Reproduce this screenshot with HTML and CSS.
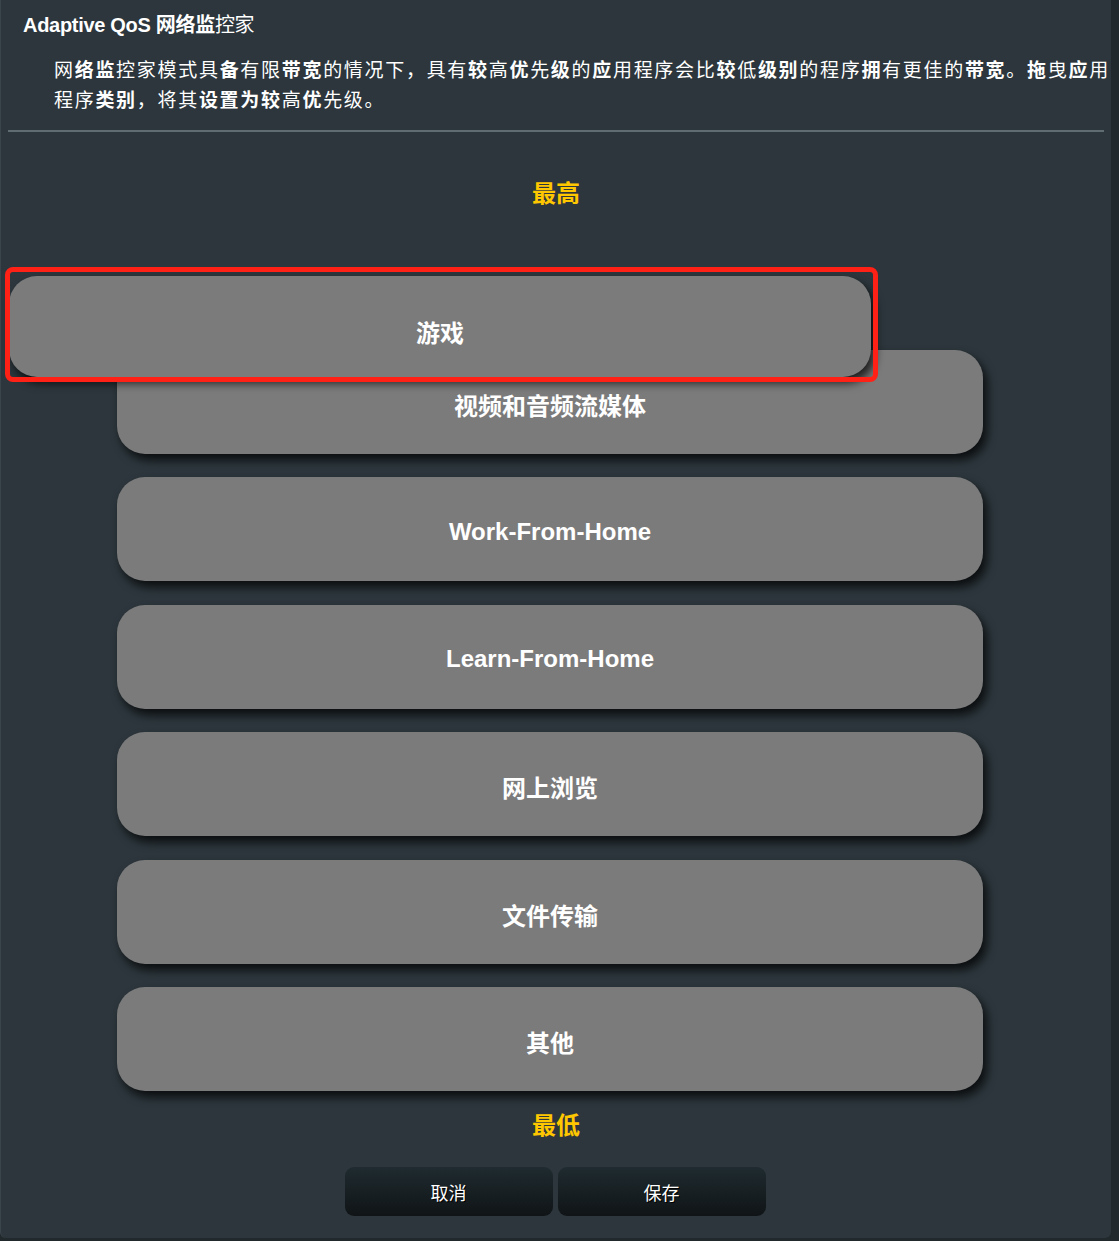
FILE: index.html
```html
<!DOCTYPE html>
<html lang="zh-CN">
<head>
	<meta charset="UTF-8">
	<title>Adaptive QoS 网络监控家</title>
	<link rel="stylesheet" href="styles.css">
</head>
<body>
	<div class="panel">
		<div class="title"><b>Adaptive QoS 网络监</b>控家</div>
		<div class="desc">
			<div class="line">网<b>络监</b>控家模式具<b>备</b>有限<b>带宽</b>的情况下，具有<b>较</b>高<b>优</b>先<b>级</b>的<b>应</b>用程序会比<b>较</b>低<b>级别</b>的程序<b>拥</b>有更佳的<b>带宽</b>。<b>拖</b>曳<b>应</b>用</div>
			<div class="line">程序<b>类别</b>，将其<b>设置为较</b>高<b>优</b>先级。</div>
		</div>
		<div class="divider"></div>

		<div class="level">最高</div>

		<ul class="list">
			<li class="card holder">游戏</li>
			<li class="card">视频和音频流媒体</li>
			<li class="card">Work-From-Home</li>
			<li class="card">Learn-From-Home</li>
			<li class="card">网上浏览</li>
			<li class="card">文件传输</li>
			<li class="card">其他</li>
		</ul>

		<div class="level low">最低</div>

		<div class="btns">
			<button class="btn">取消</button>
			<button class="btn">保存</button>
		</div>

		<!-- item being dragged -->
		<div class="card drag">游戏</div>
		<div class="mark"></div>
	</div>
</body>
</html>
```

FILE: styles.css
```css
*{ margin:0; padding:0; list-style:none; box-sizing:border-box;}
body{ background:#22292d; width:1119px; height:1241px; overflow:hidden; font-family:"Liberation Sans","Noto Sans CJK SC",sans-serif; color:#fff;}
.panel{ width:1111px; height:1238px; background:#2c363c; border-left:1px solid #3a454b; border-radius:0 0 6px 6px; position:relative; padding-top:14px;}
.title{ padding-left:22px; font-size:20px; line-height:22px; font-weight:normal; letter-spacing:-0.3px;}
.title b{ font-weight:bold;}
.desc{ margin-top:18px; padding-left:53px; font-size:19px; line-height:30px; letter-spacing:1.7px; white-space:nowrap; font-family:"Noto Sans CJK SC","Liberation Sans",sans-serif;}
.desc b{ font-weight:bold;}
.divider{ height:2px; background:#5f6c72; margin:16px 7px 0 7px;}
.level{ margin-top:45px; text-align:center; font-size:24px; line-height:30px; font-weight:bold; color:#ffc700; font-family:"Noto Sans CJK SC",sans-serif;}
.level.low{ margin-top:18px;}
.list{ width:866px; margin:15px 0 0 116px; display:flex; flex-direction:column; gap:23.5px;}
.card{ height:104px; background:#7b7b7b; border-radius:28px; box-shadow:4px 6px 10px rgba(0,0,0,0.75); display:flex; align-items:center; justify-content:center; padding-top:5px; font-size:24px; font-weight:bold; color:#fff; font-family:"Liberation Sans","Noto Sans CJK SC",sans-serif;}
.card.holder{ visibility:hidden;}
.btns{ margin-top:28px; display:flex; justify-content:center; gap:5px; padding-right:2px;}
.btn{ width:208px; height:49px; border:none; border-radius:9px; background:linear-gradient(#1f2b30,#101416); color:#fff; font-size:18px; font-family:"Noto Sans CJK SC",sans-serif; text-shadow:1px 1px 0 #000;}
.drag{ position:absolute; left:8px; top:276px; width:862px; height:101px; padding-top:9px;}
.mark{ position:absolute; left:4px; top:267px; width:873px; height:115px; border:5px solid #ff2116; border-radius:8px;}
```
